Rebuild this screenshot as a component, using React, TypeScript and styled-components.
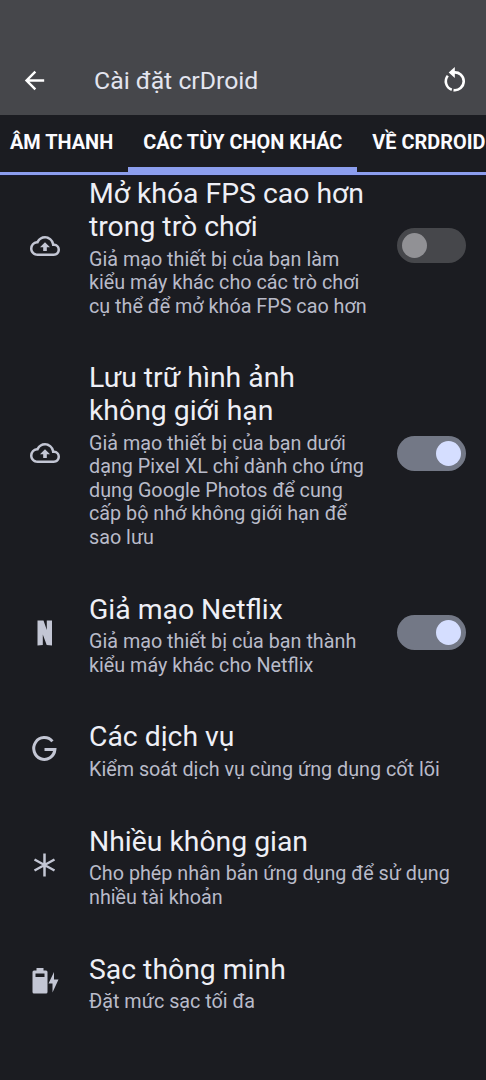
import React from 'react';
import styled, { createGlobalStyle } from 'styled-components';
import { MdArrowBack, MdOutlineBackup } from 'react-icons/md';

const GlobalStyle = createGlobalStyle`
  * { box-sizing: border-box; }
  body { margin: 0; background: #1b1c21; overflow: hidden; }
`;

const Screen = styled.div`
  display: flex;
  flex-direction: column;
  width: 486px;
  height: 1080px;
  overflow: hidden;
  background: #1b1c21;
  font-family: Roboto, 'Noto Sans', sans-serif;
`;

const AppBar = styled.header`
  display: flex;
  align-items: center;
  flex: none;
  height: 115px;
  padding: 46px 16px 0 20px;
  background: #46474b;
  color: #fff;
`;

const IconButton = styled.button`
  display: flex;
  padding: 0;
  border: 0;
  background: none;
  color: inherit;
`;

const PageTitle = styled.h1`
  flex: 1;
  margin: 0 0 0 45px;
  font-size: 24.8px;
  font-weight: 400;
  line-height: 30px;
  color: #e3e5ef;
`;

const Tabs = styled.nav`
  display: flex;
  flex: none;
  height: 61px;
  background: #1b1c21;
  border-bottom: 1px solid #171a33;
  box-shadow: inset 0 -3px 0 #8c9eee;
`;

const Tab = styled.button<{ $active?: boolean }>`
  flex: none;
  height: 59px;
  padding: 0 15px 5px;
  border: 0;
  background: none;
  box-shadow: ${(p) => (p.$active ? 'inset 0 -7px 0 #8c9eee' : 'none')};
  color: #fbfbff;
  font: 700 19.9px/23px Roboto, 'Noto Sans', sans-serif;
  white-space: nowrap;
  &:first-child { padding-left: 10px; }
`;

const Viewport = styled.main`
  flex: 1;
  overflow: hidden;
`;

const List = styled.ul`
  margin: -22.5px 0 0;
  padding: 0;
  list-style: none;
`;

const Row = styled.li`
  display: flex;
  align-items: center;
  padding-right: 20px;
`;

const IconSlot = styled.span`
  display: flex;
  justify-content: center;
  flex: none;
  width: 89px;
  color: #c3c6d4;
`;

const RowText = styled.div`
  flex: 1;
  padding: 23.6px 0 19.6px;
  white-space: pre;
`;

const RowTitle = styled.div`
  font-size: 28.35px;
  line-height: 33px;
  color: #eeeff6;
`;

const Summary = styled.div`
  margin-top: 4.6px;
  font-size: 19.75px;
  line-height: 23.5px;
  color: #b9bbc9;
`;

const Switch = styled.span<{ $on: boolean }>`
  display: flex;
  align-items: center;
  justify-content: ${(p) => (p.$on ? 'flex-end' : 'flex-start')};
  flex: none;
  width: 69px;
  height: 35px;
  padding: 0 5px;
  border-radius: 18px;
  background: ${(p) => (p.$on ? '#737886' : '#46474b')};
`;

const Thumb = styled.span<{ $on: boolean }>`
  width: 25px;
  height: 25px;
  border-radius: 50%;
  background: ${(p) => (p.$on ? '#d5deff' : '#919195')};
`;

const Glyph = styled.svg.attrs({ width: 30, height: 30, viewBox: '0 0 30 30' })`
  display: block;
`;

const Reset = () => (
  <Glyph fill="none" stroke="currentColor" strokeWidth="2.6">
    <path d="M13.500 6.500A8.900 8.900 0 1 1 13.500 24.100M11.800 23.700A8.900 8.900 0 0 1 7.800 9.700" />
    <path d="M14.800 1v11L8.700 6.500z" fill="currentColor" stroke="none" />
  </Glyph>
);

const Netflix = () => (
  <Glyph fill="currentColor">
    <path d="M7.500 2.500H13.500l3.300 9.500V2.500h5.200V27.500l-5.300-.5L12.800 16.500V27l-5.300.5z" />
  </Glyph>
);

const Google = () => (
  <Glyph fill="none" stroke="currentColor" strokeWidth="3">
    <path d="M22.400 7.400A10.600 10.900 0 1 0 24.900 15.500H14.500" />
  </Glyph>
);

const Asterisk = () => (
  <Glyph fill="none" stroke="currentColor" strokeWidth="2.5">
    <path d="M14.500 3.500v23M4.500 9.500l20 11M24.500 9.500l-20 11" />
  </Glyph>
);

const Battery = () => (
  <Glyph fill="currentColor">
    <path
      fillRule="evenodd"
      d="M6.500 2h7v2.500H16A1.500 1.500 0 0 1 17.500 6v20a1.500 1.500 0 0 1-1.500 1.500H4A1.500 1.500 0 0 1 2.500 26V6A1.500 1.500 0 0 1 4 4.500h2.500zM5.500 7.500v3.500h9V7.500z"
    />
    <path d="M24 6v7.500h4.500L22.500 26.500v-9H18.500z" />
  </Glyph>
);

const Cloud = () => <MdOutlineBackup size={30} />;

interface Setting {
  icon: React.ComponentType;
  title: string;
  summary: string;
  on?: boolean;
}

const settings: Setting[] = [
  {
    icon: Cloud,
    title: 'Mở khóa FPS cao hơn\ntrong trò chơi',
    summary: 'Giả mạo thiết bị của bạn làm\nkiểu máy khác cho các trò chơi\ncụ thể để mở khóa FPS cao hơn',
    on: false,
  },
  {
    icon: Cloud,
    title: 'Lưu trữ hình ảnh\nkhông giới hạn',
    summary:
      'Giả mạo thiết bị của bạn dưới\ndạng Pixel XL chỉ dành cho ứng\ndụng Google Photos để cung\ncấp bộ nhớ không giới hạn để\nsao lưu',
    on: true,
  },
  {
    icon: Netflix,
    title: 'Giả mạo Netflix',
    summary: 'Giả mạo thiết bị của bạn thành\nkiểu máy khác cho Netflix',
    on: true,
  },
  { icon: Google, title: 'Các dịch vụ', summary: 'Kiểm soát dịch vụ cùng ứng dụng cốt lõi' },
  {
    icon: Asterisk,
    title: 'Nhiều không gian',
    summary: 'Cho phép nhân bản ứng dụng để sử dụng\nnhiều tài khoản',
  },
  { icon: Battery, title: 'Sạc thông minh', summary: 'Đặt mức sạc tối đa' },
];

export default function App() {
  return (
    <Screen>
      <GlobalStyle />
      <AppBar>
        <IconButton aria-label="Quay lại"><MdArrowBack size={29} /></IconButton>
        <PageTitle>Cài đặt crDroid</PageTitle>
        <IconButton aria-label="Đặt lại"><Reset /></IconButton>
      </AppBar>
      <Tabs>
        <Tab>ÂM THANH</Tab>
        <Tab $active>CÁC TÙY CHỌN KHÁC</Tab>
        <Tab>VỀ CRDROID</Tab>
      </Tabs>
      <Viewport>
        <List>
          {settings.map(({ icon: Icon, title, summary, on }) => (
            <Row key={title}>
              <IconSlot><Icon /></IconSlot>
              <RowText>
                <RowTitle>{title}</RowTitle>
                <Summary>{summary}</Summary>
              </RowText>
              {on !== undefined && (
                <Switch $on={on}><Thumb $on={on} /></Switch>
              )}
            </Row>
          ))}
        </List>
      </Viewport>
    </Screen>
  );
}
